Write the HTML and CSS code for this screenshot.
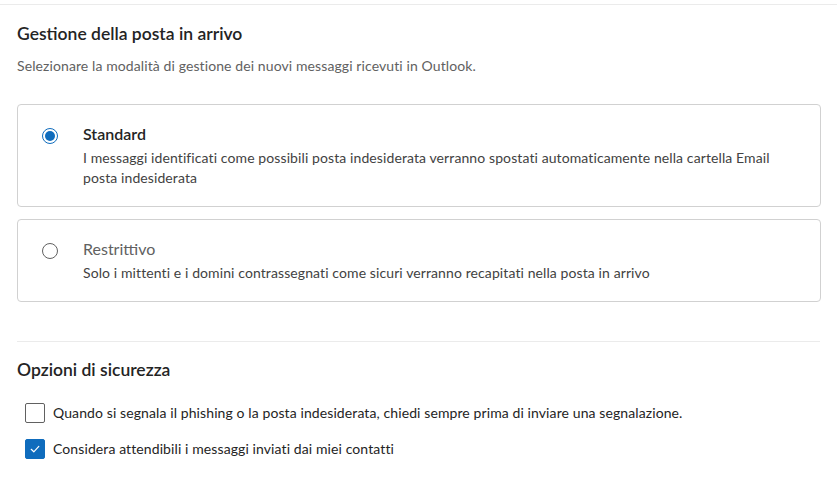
FILE: index.html
```html
<!DOCTYPE html>
<html lang="it">
<head>
  <meta charset="UTF-8">
  <title>Posta indesiderata</title>
  <link rel="stylesheet" href="styles.css">
</head>
<body>
  <div class="page">
    <section class="section first">
      <h2>Gestione della posta in arrivo</h2>
      <p class="subtitle">Selezionare la modalità di gestione dei nuovi messaggi ricevuti in Outlook.</p>

      <div class="card">
        <span class="radio checked"></span>
        <div class="card-text">
          <div class="card-title selected">Standard</div>
          <div class="card-desc">I messaggi identificati come possibili posta indesiderata verranno spostati automaticamente nella cartella Email posta indesiderata</div>
        </div>
      </div>

      <div class="card">
        <span class="radio"></span>
        <div class="card-text">
          <div class="card-title">Restrittivo</div>
          <div class="card-desc">Solo i mittenti e i domini contrassegnati come sicuri verranno recapitati nella posta in arrivo</div>
        </div>
      </div>
    </section>

    <section class="section second">
      <h2>Opzioni di sicurezza</h2>
      <label class="check-row">
        <span class="checkbox"></span>
        <span>Quando si segnala il phishing o la posta indesiderata, chiedi sempre prima di inviare una segnalazione.</span>
      </label>
      <label class="check-row">
        <span class="checkbox checked">
          <svg width="12" height="12" viewBox="0 0 12 12"><path d="M2.2 6.3 L4.8 8.8 L9.8 3.4" fill="none" stroke="#fff" stroke-width="1.2" stroke-linecap="round" stroke-linejoin="round"/></svg>
        </span>
        <span>Considera attendibili i messaggi inviati dai miei contatti</span>
      </label>
    </section>
  </div>
</body>
</html>
```

FILE: styles.css
```css
body { margin: 0; background: #fff; font-family: Lato, "Noto Sans", sans-serif; color: #242424; letter-spacing: 0.1px; }
.page { padding-top: 4px; }
.section { border-top: 1px solid #ebebeb; }
.section.first { padding: 16px 17px 39px; }
.section.second { margin: 0 17px; padding-top: 15px; }
h2 { margin: 0; font-size: 17.5px; line-height: 26px; font-weight: 600; letter-spacing: 0; }
.subtitle { margin: 9px 0 28px; font-size: 14px; line-height: 20px; color: #616161; }
.card { display: flex; align-items: flex-start; gap: 25px; border: 1px solid #d1d1d1; border-radius: 4px; padding: 18px 24px; width: 754px; margin-bottom: 12px; }
.card:last-child { margin-bottom: 0; }
.radio { flex: none; width: 14px; height: 14px; margin-top: 5px; border: 1px solid #616161; border-radius: 50%; position: relative; }
.radio.checked { border-color: #0f6cbd; }
.radio.checked::after { content: ""; position: absolute; left: 2px; top: 2px; width: 10px; height: 10px; border-radius: 50%; background: #0f6cbd; }
.card-title { font-size: 16px; line-height: 22px; color: #616161; letter-spacing: 0; }
.card-title.selected { font-weight: 600; color: #242424; }
.card-desc { margin-top: 3px; font-size: 14px; line-height: 20px; color: #424242; }
.check-row { display: flex; align-items: center; gap: 8px; margin: 0 0 16px 8px; font-size: 14px; line-height: 20px; color: #242424; }
.section.second h2 { margin-bottom: 20px; }
.checkbox { flex: none; width: 18px; height: 18px; border: 1px solid #616161; border-radius: 2px; display: flex; align-items: center; justify-content: center; }
.checkbox.checked { background: #0f6cbd; border-color: #0f6cbd; }
```
